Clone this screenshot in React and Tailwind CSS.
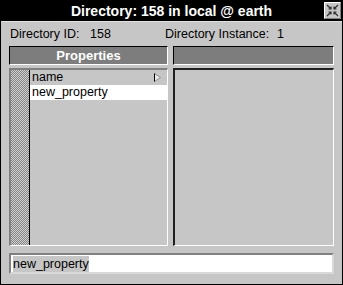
const Checker = () => (
  <svg width="19" height="100%" className="block h-full border-r border-black shrink-0">
    <defs>
      <pattern id="chk" width="2" height="2" patternUnits="userSpaceOnUse">
        <rect width="2" height="2" fill="#d0d0d0" />
        <rect width="1" height="1" fill="#858585" />
        <rect x="1" y="1" width="1" height="1" fill="#858585" />
      </pattern>
    </defs>
    <rect width="100%" height="100%" fill="url(#chk)" />
  </svg>
);

const CloseIcon = () => (
  <svg width="17" height="17" viewBox="0 0 17 17">
    <rect x="0" y="0" width="17" height="17" fill="#c6c6c6" />
    <path d="M0.5 16.5V0.5H16.5" stroke="#fff" strokeWidth="1" fill="none" />
    <path d="M16.5 0.5V16.5H0.5" stroke="#808080" strokeWidth="1" fill="none" />
    <g stroke="#303030" strokeWidth="1.2" fill="none">
      <path d="M3 3L7 7M7 4.5V7H4.5" />
      <path d="M14 3L10 7M10 4.5V7H12.5" />
      <path d="M3 14L7 10M7 12.5V10H4.5" />
      <path d="M14 14L10 10M10 12.5V10H12.5" />
    </g>
  </svg>
);

const App = () => {
  return (
    <div
      className="w-[343px] h-[285px] bg-[#c6c6c6] border border-black flex flex-col text-black"
      style={{ fontFamily: '"Liberation Sans", Arial, sans-serif' }}
    >
      <div className="relative h-[21px] bg-black flex items-center justify-center border-b border-[#e0e0e0] shrink-0">
        <span className="text-white font-bold text-[14px] leading-none">
          Directory: 158 in local @ earth
        </span>
        <div className="absolute right-[1px] top-[1px]">
          <CloseIcon />
        </div>
      </div>

      <div className="h-[24px] flex items-center px-[9px] text-[12.5px] shrink-0">
        <span className="w-[80px]">Directory ID:</span>
        <span className="w-[75px]">158</span>
        <span className="w-[112px]">Directory Instance:</span>
        <span>1</span>
      </div>

      <div className="flex gap-[5px] px-[8px]">
        <div className="w-[159px] flex flex-col gap-[3px]">
          <div className="h-[19px] bg-[#7d7d7d] border-t border-l border-black border-b-white border-r-white border-b border-r flex items-center justify-center">
            <span className="text-white font-bold text-[13px] leading-none">
              Properties
            </span>
          </div>
          <div className="h-[178px] border-t-2 border-l-2 border-t-[#808080] border-l-[#808080] border-b border-r border-b-white border-r-white flex">
            <Checker />
            <div className="flex-1 flex flex-col text-[12.5px]">
              <div className="h-[15px] flex items-center justify-between pl-[2px] pr-[6px]">
                <span>name</span>
                <svg width="7" height="9" viewBox="0 0 7 9">
                  <path d="M0.5 0.5V8.5L6.5 4.5Z" fill="#e8e8e8" stroke="#909090" />
                  <path d="M0.5 0.5V8.5" stroke="#000" />
                </svg>
              </div>
              <div className="h-[15px] flex items-center bg-white pl-[2px]">
                <span>new_property</span>
              </div>
            </div>
          </div>
        </div>

        <div className="w-[161px] flex flex-col gap-[3px]">
          <div className="h-[19px] bg-[#7d7d7d] border-t border-l border-black border-b border-r border-b-white border-r-white" />
          <div className="h-[178px] border-t-2 border-l-2 border-t-[#202020] border-l-[#202020] border-b border-r border-b-white border-r-white" />
        </div>
      </div>

      <div className="px-[8px] mt-[7px]">
        <div className="h-[21px] bg-white border-t-2 border-l-2 border-t-[#808080] border-l-[#808080] border-b-2 border-r-2 border-b-[#d8d8d8] border-r-[#d8d8d8] flex items-center pl-[2px] text-[12.5px]">
          <span className="bg-[#c6c6c6] leading-[16px]">new_property</span>
        </div>
      </div>
    </div>
  );
};

export default App;
